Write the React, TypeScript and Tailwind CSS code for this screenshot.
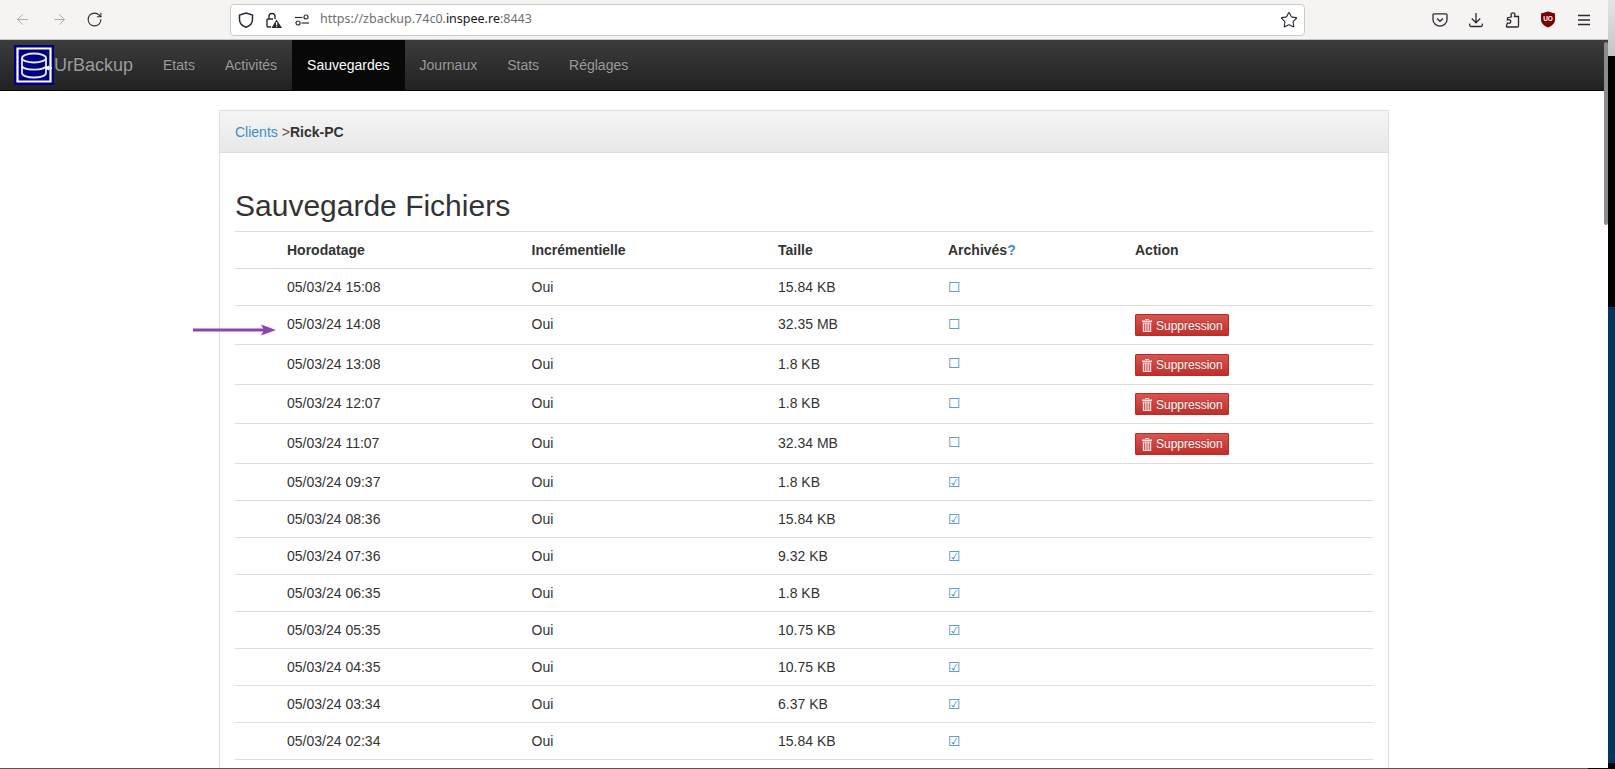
import { ArrowLeft, ArrowRight, RotateCw, Star } from "lucide-react";

const navItems = ["Etats", "Activités", "Sauvegardes", "Journaux", "Stats", "Réglages"];

const backups = [
  { date: "05/03/24 15:08", size: "15.84 KB", archived: false, del: false, tall: false },
  { date: "05/03/24 14:08", size: "32.35 MB", archived: false, del: true, tall: false },
  { date: "05/03/24 13:08", size: "1.8 KB", archived: false, del: true, tall: true },
  { date: "05/03/24 12:07", size: "1.8 KB", archived: false, del: true, tall: false },
  { date: "05/03/24 11:07", size: "32.34 MB", archived: false, del: true, tall: true },
  { date: "05/03/24 09:37", size: "1.8 KB", archived: true, del: false, tall: false },
  { date: "05/03/24 08:36", size: "15.84 KB", archived: true, del: false, tall: false },
  { date: "05/03/24 07:36", size: "9.32 KB", archived: true, del: false, tall: false },
  { date: "05/03/24 06:35", size: "1.8 KB", archived: true, del: false, tall: false },
  { date: "05/03/24 05:35", size: "10.75 KB", archived: true, del: false, tall: false },
  { date: "05/03/24 04:35", size: "10.75 KB", archived: true, del: false, tall: false },
  { date: "05/03/24 03:34", size: "6.37 KB", archived: true, del: false, tall: false },
  { date: "05/03/24 02:34", size: "15.84 KB", archived: true, del: false, tall: false },
];

function ShieldIcon() {
  return (
    <svg width="18" height="18" viewBox="0 0 18 18" fill="none" stroke="#2b2a33" strokeWidth="1.5">
      <path d="M9 2 L15.5 4 V8.5 C15.5 12.5 12.5 15 9 16.2 C5.5 15 2.5 12.5 2.5 8.5 V4 Z" />
    </svg>
  );
}

function LockIcon() {
  return (
    <svg width="18" height="18" viewBox="0 0 18 18" fill="none">
      <path d="M5 8 V5.5 C5 1.5 11 1.5 11 5.5 V8" stroke="#2b2a33" strokeWidth="1.4" />
      <path d="M9 8 H4 Q3 8 3 9 V15 Q3 16 4 16 H7" stroke="#2b2a33" strokeWidth="1.4" />
      <path d="M12.5 8.5 L18 17 H7.5 Z" fill="#2b2a33" />
      <rect x="12" y="11" width="1.2" height="3" fill="#fff" />
      <rect x="12" y="14.6" width="1.2" height="1.2" fill="#fff" />
    </svg>
  );
}

function PermissionsIcon() {
  return (
    <svg width="16" height="16" viewBox="0 0 16 16" fill="none" stroke="#2b2a33" strokeWidth="1.2">
      <path d="M1 5.5 H8.5" />
      <circle cx="12" cy="5" r="2" />
      <path d="M7.5 11 H15" />
      <circle cx="4" cy="11" r="2" />
    </svg>
  );
}

function PocketIcon() {
  return (
    <svg width="16" height="16" viewBox="0 0 16 16" fill="none" stroke="#2b2a33" strokeWidth="1.3">
      <path d="M2 1.8 H14 Q15 1.8 15 3 V7.5 C15 11.5 11.5 14.2 8 14.2 C4.5 14.2 1 11.5 1 7.5 V3 Q1 1.8 2 1.8 Z" />
      <path d="M5 6.5 L8 9.3 L11 6.5" />
    </svg>
  );
}

function DownloadIcon() {
  return (
    <svg width="16" height="16" viewBox="0 0 16 16" fill="none" stroke="#2b2a33" strokeWidth="1.3">
      <path d="M8 1 V10.5 M3.8 6.5 L8 10.8 L12.2 6.5" />
      <path d="M1.7 11.5 V13 Q1.7 14.5 3 14.5 H13 Q14.3 14.5 14.3 13 V11.5" />
    </svg>
  );
}

function PuzzleIcon() {
  return (
    <svg width="16" height="16" viewBox="0 0 16 16" fill="none" stroke="#2b2a33" strokeWidth="1.3">
      <path d="M3 15 H13.5 Q14.5 15 14.5 14 V4.5 H10.5 C10.5 3.5 11 3.2 11 2.5 C11 0.5 7 0.2 7 2.5 C7 3.2 7.5 3.7 7.5 4.8 L3.5 6 V8 C5 7.2 6.8 7.8 6.8 9.5 C6.8 11.2 5 11.8 3.5 11 L2.5 13.8 Q2.2 15 3 15 Z" />
    </svg>
  );
}

function UBlockIcon() {
  return (
    <svg width="16" height="17" viewBox="0 0 16 17">
      <path d="M8 0.5 L15 2.5 V9 C15 12.5 11.5 15 8 16.5 C4.5 15 1 12.5 1 9 V2.5 Z" fill="#800000" />
      <text x="8" y="9.8" textAnchor="middle" fontSize="6.5" fontWeight="700" fill="#fff" fontFamily="'Liberation Sans', sans-serif">
        UO
      </text>
    </svg>
  );
}

function MenuIcon() {
  return (
    <svg width="14" height="12" viewBox="0 0 14 12" stroke="#2b2a33" strokeWidth="1.3">
      <path d="M1 1.5 H13 M1 6 H13 M1 10.5 H13" />
    </svg>
  );
}

function Logo() {
  return (
    <svg width="40" height="40" viewBox="0 0 40 40" className="shrink-0">
      <rect width="40" height="40" fill="#000080" />
      <path d="M3.5 3.5 H36.5 V36.5 H3.5 Z" fill="none" stroke="#fff" strokeWidth="2.2" />
      <g fill="none" stroke="#e8e8f6" strokeWidth="1.8">
        <ellipse cx="20" cy="13" rx="12" ry="4.5" />
        <path d="M8 13 V28 C8 34 32 34 32 28 V13" />
        <path d="M8 20.5 C8 26 32 26 32 20.5" />
      </g>
      <path d="M32 23 H38 M35 21 L32.5 23 L35 25" stroke="#fff" strokeWidth="1.6" fill="none" />
    </svg>
  );
}

function TrashIcon() {
  return (
    <svg width="10" height="13" viewBox="0 0 10 13" fill="#fbe3e8" className="shrink-0">
      <rect x="3" y="0" width="4" height="1" />
      <rect x="0" y="1.5" width="10" height="1.5" />
      <path d="M0.8 3.5 H9.2 V13 H0.8 Z M2.2 4.5 V12 H3.2 V4.5 Z M4.5 4.5 V12 H5.5 V4.5 Z M6.8 4.5 V12 H7.8 V4.5 Z" fillRule="evenodd" />
    </svg>
  );
}

function DeleteButton({ tall }: { tall: boolean }) {
  return (
    <button
      className={
        tall
          ? "flex items-center h-[22px] w-[94px] pl-[6px] gap-[4px] border border-[#b92c28] rounded-[1px] bg-gradient-to-b from-[#d9534f] to-[#c12e2a] text-[12px] leading-[18px] text-white [text-shadow:0_-1px_0_rgba(0,0,0,0.2)]"
          : "flex items-center h-[22px] w-[94px] pl-[6px] pt-[1px] gap-[4px] border border-[#b92c28] rounded-[1px] bg-gradient-to-b from-[#d9534f] to-[#c12e2a] text-[12px] leading-[18px] text-white [text-shadow:0_-1px_0_rgba(0,0,0,0.2)]"
      }
    >
      <TrashIcon />
      <span>Suppression</span>
    </button>
  );
}

function BrowserBar() {
  return (
    <div className="h-[40px] shrink-0 flex items-center bg-[#f5f4f2] border-b border-[#c8c6c4] relative">
      <div className="w-[230px] shrink-0 flex items-center pl-[14px] gap-[20px]">
        <ArrowLeft size={17} strokeWidth={1.3} color="#a8a8ab" />
        <ArrowRight size={17} strokeWidth={1.3} color="#a8a8ab" />
        <RotateCw size={17} strokeWidth={1.5} color="#2b2a33" className="-ml-[2px]" />
      </div>
      <div className="w-[1075px] h-[32px] shrink-0 flex items-center bg-white border border-[#cfc9c4] rounded-[4px] pl-[6px] pr-[6px]">
        <ShieldIcon />
        <span className="ml-[9px]"><LockIcon /></span>
        <span className="ml-[12px]"><PermissionsIcon /></span>
        <span className="ml-[10px] text-[12.5px] text-[#6f6e75] [font-family:'Noto_Sans',sans-serif]">
          https://zbackup.74c0.<span className="text-[#15141a]">inspee.re</span>:8443
        </span>
        <span className="ml-auto"><Star size={18} strokeWidth={1.5} color="#2b2a33" /></span>
      </div>
      <div className="flex items-center ml-[127px] gap-[20px]">
        <PocketIcon />
        <DownloadIcon />
        <PuzzleIcon />
        <UBlockIcon />
        <span className="ml-[1px]"><MenuIcon /></span>
      </div>
    </div>
  );
}

function NavBar() {
  return (
    <div className="h-[51px] shrink-0 flex items-stretch bg-gradient-to-b from-[#3c3c3c] to-[#222222] border-b border-[#080808] pl-[14px]">
      <div className="flex items-center text-[18px] text-[#9d9d9d] pr-[15px] [text-shadow:0_-1px_0_rgba(0,0,0,0.25)]">
        <Logo />
        <span className="pt-[1px]">UrBackup</span>
      </div>
      {navItems.map((item) => (
        <div
          key={item}
          className={
            item === "Sauvegardes"
              ? "flex items-center px-[15px] pt-[1px] text-[14px] text-white bg-[#080808]"
              : "flex items-center px-[15px] pt-[1px] text-[14px] text-[#9d9d9d] [text-shadow:0_-1px_0_rgba(0,0,0,0.25)]"
          }
        >
          {item}
        </div>
      ))}
    </div>
  );
}

function BackupTable() {
  return (
    <table className="w-[1138px] table-fixed border-collapse text-[14px] leading-[20px] text-[#333333]">
      <colgroup>
        <col className="w-[44px]" />
        <col className="w-[244.5px]" />
        <col className="w-[246.5px]" />
        <col className="w-[170px]" />
        <col className="w-[187px]" />
        <col />
      </colgroup>
      <thead>
        <tr className="border-t border-b border-[#dddddd] text-left">
          <th className="p-2"></th>
          <th className="p-2 font-bold">Horodatage</th>
          <th className="p-2 font-bold">Incrémentielle</th>
          <th className="p-2 font-bold">Taille</th>
          <th className="p-2 font-bold">
            Archivés<span className="text-[#428bca]">?</span>
          </th>
          <th className="p-2 font-bold">Action</th>
        </tr>
      </thead>
      <tbody>
        {backups.map((b) => {
          // rows with a button alternate 39/40px in the page, the taller ones sit 1px lower
          const cell = b.tall ? "px-2 pt-[9px] pb-2 align-top" : "p-2 align-top";
          return (
            <tr key={b.date} className="border-b border-[#dddddd]">
              <td className="p-2"></td>
              <td className={cell}>{b.date}</td>
              <td className={cell}>Oui</td>
              <td className={cell}>{b.size}</td>
              <td className="p-2 align-top text-[#428bca] [font-family:'DejaVu_Sans',sans-serif]">
                {b.archived ? "☑" : "☐"}
              </td>
              <td className={cell}>{b.del && <DeleteButton tall={b.tall} />}</td>
            </tr>
          );
        })}
      </tbody>
    </table>
  );
}

export default function App() {
  return (
    <div className="h-screen flex overflow-hidden bg-white [font-family:'Liberation_Sans',Arial,sans-serif]">
      <div className="w-[1608px] shrink-0 flex flex-col relative">
        <BrowserBar />
        <NavBar />

        <div className="flex-1 min-h-0 overflow-hidden pt-[19px] pl-[219px]">
          <div className="w-[1170px] border border-[#dddddd] rounded-[1px] pb-[40px]">
            {/* Breadcrumb */}
            <div className="h-[42px] px-[15px] pt-[1px] flex items-center bg-gradient-to-b from-[#f5f5f5] to-[#e8e8e8] border-b border-[#dddddd] text-[14px] text-[#333333]">
              <span className="text-[#428bca]">Clients</span>
              <span className="ml-[4px] text-[#555555]">&gt;</span>
              <span className="font-bold">Rick-PC</span>
            </div>
            <div className="px-[15px] pt-[36px]">
              <h2 className="text-[30px] leading-[33px] mb-[9px] text-[#333333]">Sauvegarde Fichiers</h2>
              <BackupTable />
            </div>
          </div>
        </div>

        <div className="h-px shrink-0 flex">
          <div className="w-[1588px] bg-[#555555]"></div>
          <div className="flex-1 bg-black"></div>
        </div>

        {/* Annotation arrow drawn over the page */}
        <svg width="84" height="14" viewBox="0 0 84 14" className="absolute left-[193px] top-[323px]">
          <path d="M0 7 H74" stroke="#8e44ad" strokeWidth="3" />
          <path d="M68 1.5 L83 7 L68 12.5 L71 7 Z" fill="#8e44ad" />
        </svg>

        {/* Overlay scrollbar */}
        <div className="absolute right-0 top-[42px] h-[183px] w-[4px] rounded-[2px] bg-[#868e8e]"></div>
      </div>

      {/* Strip of the desktop behind the window */}
      <div className="w-[7px] shrink-0 flex flex-col bg-black">
        <div className="h-[56px] bg-gradient-to-b from-[#e4e4e4] to-[#c4c4c4]"></div>
        <div className="h-[251px]"></div>
        <div className="h-[456px] bg-[#003560]"></div>
      </div>
    </div>
  );
}
